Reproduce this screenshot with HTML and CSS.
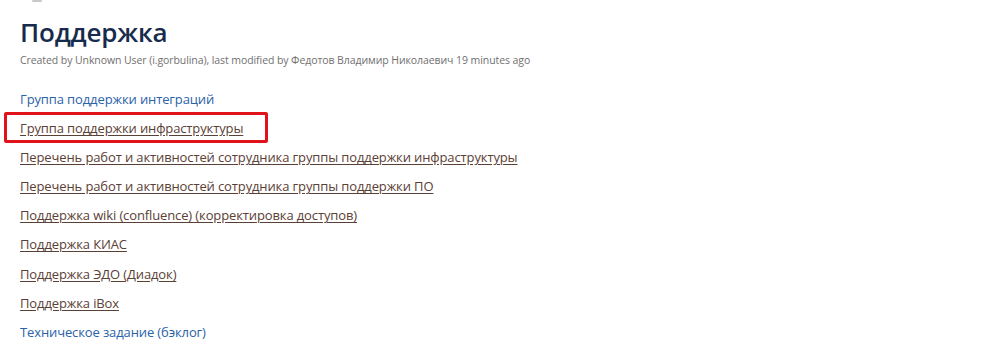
FILE: index.html
```html
<!DOCTYPE html>
<html lang="ru">
<head>
<meta charset="utf-8">
<title>Поддержка</title>
<link rel="stylesheet" href="styles.css">
</head>
<body>
<div class="page">
  <div class="crumb-stub"></div>
  <h1 class="title">Поддержка</h1>
  <div class="meta">Created by Unknown User (i.gorbulina), last modified by Федотов Владимир Николаевич 19 minutes ago</div>
  <ul class="links">
    <li><a class="link" href="#a">Группа поддержки интеграций</a></li>
    <li class="marked"><a class="link visited" href="#b">Группа поддержки инфраструктуры</a></li>
    <li><a class="link visited" href="#c">Перечень работ и активностей сотрудника группы поддержки инфраструктуры</a></li>
    <li><a class="link visited" href="#d">Перечень работ и активностей сотрудника группы поддержки ПО</a></li>
    <li><a class="link visited" href="#e">Поддержка wiki (confluence) (корректировка доступов)</a></li>
    <li><a class="link visited" href="#f">Поддержка КИАС</a></li>
    <li><a class="link visited" href="#g">Поддержка ЭДО (Диадок)</a></li>
    <li><a class="link visited" href="#h">Поддержка iBox</a></li>
    <li><a class="link" href="#i">Техническое задание (бэклог)</a></li>
  </ul>
</div>
</body>
</html>
```
FILE: styles.css
```css
html, body {
  margin: 0;
  padding: 0;
  background: #ffffff;
}
body {
  font-family: "Open Sans", "Noto Sans", sans-serif;
  width: 999px;
  height: 340px;
  overflow: hidden;
}
.page {
  padding: 0 0 0 20px;
  position: relative;
}
.crumb-stub {
  position: absolute;
  left: 32px;
  top: 0;
  width: 10px;
  height: 2px;
  background: #c8c8c8;
  border-radius: 1px;
}
.title {
  margin: 0;
  padding-top: 16px;
  font-size: 26px;
  line-height: 32px;
  font-weight: 600;
  color: #172b4d;
  letter-spacing: -0.2px;
}
.meta {
  margin-top: 5px;
  font-size: 10.5px;
  line-height: 14px;
  color: #707070;
  letter-spacing: -0.08px;
}
.links {
  list-style: none;
  margin: 21px 0 0 0;
  padding: 0;
  display: flex;
  flex-direction: column;
  gap: 9.1px;
}
.links li {
  height: 20px;
  line-height: 20px;
  position: relative;
}
.link {
  font-size: 13px;
  color: #2a62a8;
  text-decoration: none;
  letter-spacing: -0.12px;
}
.link.visited {
  color: #5b4035;
  text-decoration: underline;
  text-underline-offset: 2px;
}
.marked::after {
  content: "";
  position: absolute;
  left: -16px;
  top: -5px;
  width: 258px;
  height: 25px;
  border: 3px solid #e0121b;
  border-radius: 2px;
}
```
